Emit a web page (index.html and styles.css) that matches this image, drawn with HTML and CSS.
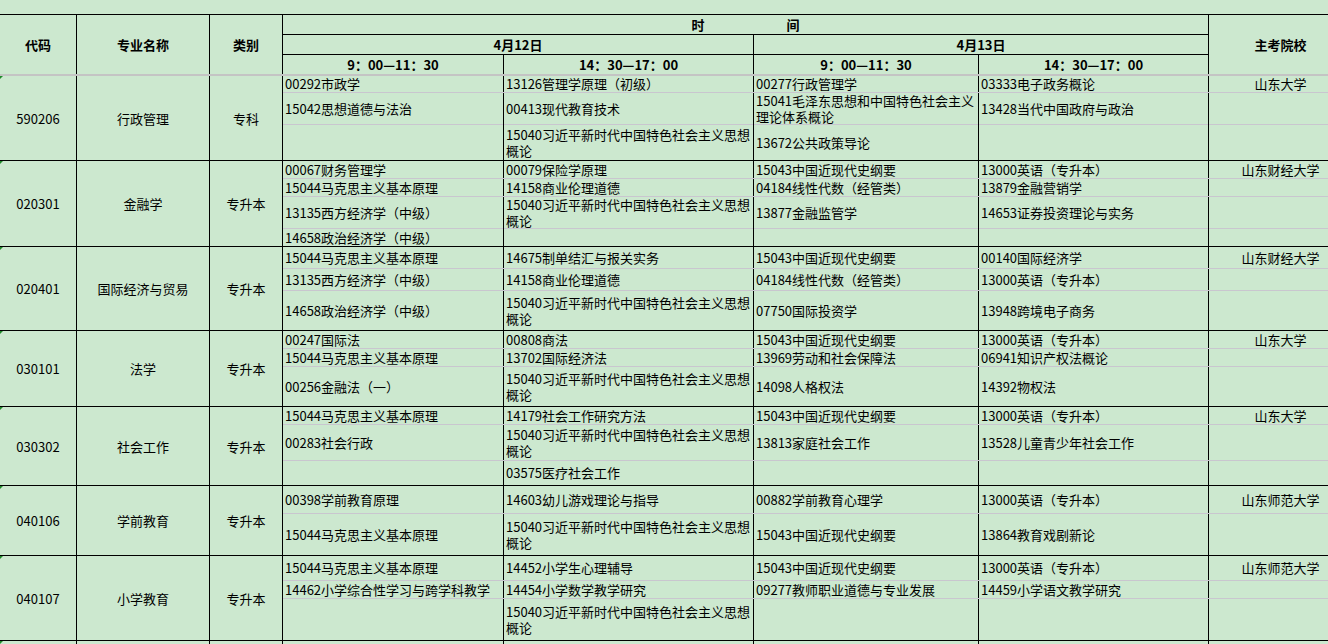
FILE: index.html
```html
<!DOCTYPE html>
<html lang="zh-CN">
<head>
<meta charset="utf-8">
<title>考试安排</title>
<link rel="stylesheet" href="styles.css">
</head>
<body>
<div class="sheet">
  <div class="head">
    <div class="hc c-code">代码</div>
    <div class="hc c-name">专业名称</div>
    <div class="hc c-kind">类别</div>
    <div class="hc c-time"><span>时</span><span>间</span></div>
    <div class="hc c-d1">4月12日</div>
    <div class="hc c-d2">4月13日</div>
    <div class="hc c-t1">9：00—11：30</div>
    <div class="hc c-t2">14：30—17：00</div>
    <div class="hc c-t3">9：00—11：30</div>
    <div class="hc c-t4">14：30—17：00</div>
    <div class="hc c-school">主考院校</div>
  </div>
  <div class="freeze"></div>

  <div class="group">
    <div class="code">590206</div>
    <div class="name">行政管理</div>
    <div class="kind">专科</div>
    <div class="subs">
      <div class="sub h17">
        <div class="cell">00292市政学</div>
        <div class="cell">13126管理学原理（初级）</div>
        <div class="cell">00277行政管理学</div>
        <div class="cell">03333电子政务概论</div>
        <div class="cell school">山东大学</div>
      </div>
      <div class="sub h32">
        <div class="cell">15042思想道德与法治</div>
        <div class="cell">00413现代教育技术</div>
        <div class="cell">15041毛泽东思想和中国特色社会主义理论体系概论</div>
        <div class="cell">13428当代中国政府与政治</div>
        <div class="cell school"></div>
      </div>
      <div class="sub h35">
        <div class="cell"></div>
        <div class="cell">15040习近平新时代中国特色社会主义思想概论</div>
        <div class="cell">13672公共政策导论</div>
        <div class="cell"></div>
        <div class="cell school"></div>
      </div>
    </div>
  </div>

  <div class="group">
    <div class="code">020301</div>
    <div class="name">金融学</div>
    <div class="kind">专升本</div>
    <div class="subs">
      <div class="sub h18">
        <div class="cell">00067财务管理学</div>
        <div class="cell">00079保险学原理</div>
        <div class="cell">15043中国近现代史纲要</div>
        <div class="cell">13000英语（专升本）</div>
        <div class="cell school">山东财经大学</div>
      </div>
      <div class="sub h18">
        <div class="cell">15044马克思主义基本原理</div>
        <div class="cell">14158商业伦理道德</div>
        <div class="cell">04184线性代数（经管类）</div>
        <div class="cell">13879金融营销学</div>
        <div class="cell school"></div>
      </div>
      <div class="sub h32">
        <div class="cell">13135西方经济学（中级）</div>
        <div class="cell">15040习近平新时代中国特色社会主义思想概论</div>
        <div class="cell">13877金融监管学</div>
        <div class="cell">14653证券投资理论与实务</div>
        <div class="cell school"></div>
      </div>
      <div class="sub h17">
        <div class="cell">14658政治经济学（中级）</div>
        <div class="cell"></div>
        <div class="cell"></div>
        <div class="cell"></div>
        <div class="cell school"></div>
      </div>
    </div>
  </div>

  <div class="group">
    <div class="code">020401</div>
    <div class="name">国际经济与贸易</div>
    <div class="kind">专升本</div>
    <div class="subs">
      <div class="sub h22">
        <div class="cell">15044马克思主义基本原理</div>
        <div class="cell">14675制单结汇与报关实务</div>
        <div class="cell">15043中国近现代史纲要</div>
        <div class="cell">00140国际经济学</div>
        <div class="cell school">山东财经大学</div>
      </div>
      <div class="sub h22">
        <div class="cell">13135西方经济学（中级）</div>
        <div class="cell">14158商业伦理道德</div>
        <div class="cell">04184线性代数（经管类）</div>
        <div class="cell">13000英语（专升本）</div>
        <div class="cell school"></div>
      </div>
      <div class="sub h39">
        <div class="cell">14658政治经济学（中级）</div>
        <div class="cell">15040习近平新时代中国特色社会主义思想概论</div>
        <div class="cell">07750国际投资学</div>
        <div class="cell">13948跨境电子商务</div>
        <div class="cell school"></div>
      </div>
    </div>
  </div>

  <div class="group">
    <div class="code">030101</div>
    <div class="name">法学</div>
    <div class="kind">专升本</div>
    <div class="subs">
      <div class="sub h18">
        <div class="cell">00247国际法</div>
        <div class="cell">00808商法</div>
        <div class="cell">15043中国近现代史纲要</div>
        <div class="cell">13000英语（专升本）</div>
        <div class="cell school">山东大学</div>
      </div>
      <div class="sub h18">
        <div class="cell">15044马克思主义基本原理</div>
        <div class="cell">13702国际经济法</div>
        <div class="cell">13969劳动和社会保障法</div>
        <div class="cell">06941知识产权法概论</div>
        <div class="cell school"></div>
      </div>
      <div class="sub h39">
        <div class="cell">00256金融法（一）</div>
        <div class="cell">15040习近平新时代中国特色社会主义思想概论</div>
        <div class="cell">14098人格权法</div>
        <div class="cell">14392物权法</div>
        <div class="cell school"></div>
      </div>
    </div>
  </div>

  <div class="group">
    <div class="code">030302</div>
    <div class="name">社会工作</div>
    <div class="kind">专升本</div>
    <div class="subs">
      <div class="sub h18">
        <div class="cell">15044马克思主义基本原理</div>
        <div class="cell">14179社会工作研究方法</div>
        <div class="cell">15043中国近现代史纲要</div>
        <div class="cell">13000英语（专升本）</div>
        <div class="cell school">山东大学</div>
      </div>
      <div class="sub h36">
        <div class="cell">00283社会行政</div>
        <div class="cell">15040习近平新时代中国特色社会主义思想概论</div>
        <div class="cell">13813家庭社会工作</div>
        <div class="cell">13528儿童青少年社会工作</div>
        <div class="cell school"></div>
      </div>
      <div class="sub h24">
        <div class="cell"></div>
        <div class="cell">03575医疗社会工作</div>
        <div class="cell"></div>
        <div class="cell"></div>
        <div class="cell school"></div>
      </div>
    </div>
  </div>

  <div class="group">
    <div class="code">040106</div>
    <div class="name">学前教育</div>
    <div class="kind">专升本</div>
    <div class="subs">
      <div class="sub h28">
        <div class="cell">00398学前教育原理</div>
        <div class="cell">14603幼儿游戏理论与指导</div>
        <div class="cell">00882学前教育心理学</div>
        <div class="cell">13000英语（专升本）</div>
        <div class="cell school">山东师范大学</div>
      </div>
      <div class="sub h41">
        <div class="cell">15044马克思主义基本原理</div>
        <div class="cell">15040习近平新时代中国特色社会主义思想概论</div>
        <div class="cell">15043中国近现代史纲要</div>
        <div class="cell">13864教育戏剧新论</div>
        <div class="cell school"></div>
      </div>
    </div>
  </div>

  <div class="group">
    <div class="code">040107</div>
    <div class="name">小学教育</div>
    <div class="kind">专升本</div>
    <div class="subs">
      <div class="sub h25">
        <div class="cell">15044马克思主义基本原理</div>
        <div class="cell">14452小学生心理辅导</div>
        <div class="cell">15043中国近现代史纲要</div>
        <div class="cell">13000英语（专升本）</div>
        <div class="cell school">山东师范大学</div>
      </div>
      <div class="sub h18">
        <div class="cell">14462小学综合性学习与跨学科教学</div>
        <div class="cell">14454小学数学教学研究</div>
        <div class="cell">09277教师职业道德与专业发展</div>
        <div class="cell">14459小学语文教学研究</div>
        <div class="cell school"></div>
      </div>
      <div class="sub h41">
        <div class="cell"></div>
        <div class="cell">15040习近平新时代中国特色社会主义思想概论</div>
        <div class="cell"></div>
        <div class="cell"></div>
        <div class="cell school"></div>
      </div>
    </div>
  </div>

  <div class="group">
    <div class="code"></div>
    <div class="name"></div>
    <div class="kind"></div>
    <div class="subs">
      <div class="sub h40">
        <div class="cell"></div>
        <div class="cell"></div>
        <div class="cell"></div>
        <div class="cell"></div>
        <div class="cell school"></div>
      </div>
    </div>
  </div>
</div>
</body>
</html>
```

FILE: styles.css
```css
* {
  box-sizing: border-box;
}

html,
body {
  margin: 0;
  padding: 0;
  overflow: hidden;
  background: #cce8cf;
}

body {
  font-family: "Noto Sans CJK SC", "Noto Sans", sans-serif;
  font-size: 13px;
  color: #000;
}

.sheet {
  width: 1353px;
  margin-top: 14px;
}

/* ---------- header ---------- */
.head {
  display: grid;
  grid-template-columns: 77px 133px 73px 221px 250px 225px 230px 144px;
  grid-template-rows: 20px 20px 19px;
  border-top: 1px solid #000;
}

.hc {
  display: flex;
  align-items: center;
  justify-content: center;
  border-right: 1px solid #000;
  font-weight: 700;
  line-height: 16px;
  white-space: nowrap;
}

.c-code { grid-column: 1; grid-row: 1 / 4; }
.c-name { grid-column: 2; grid-row: 1 / 4; }
.c-kind { grid-column: 3; grid-row: 1 / 4; }
.c-school { grid-column: 8; grid-row: 1 / 4; }

.c-time {
  grid-column: 4 / 8;
  grid-row: 1;
  gap: 82px;
  border-bottom: 1px solid #000;
}

.c-d1 {
  grid-column: 4 / 6;
  grid-row: 2;
  border-bottom: 1px solid #000;
}

.c-d2 {
  grid-column: 6 / 8;
  grid-row: 2;
  border-bottom: 1px solid #000;
}

.c-t1 { grid-column: 4; grid-row: 3; }
.c-t2 { grid-column: 5; grid-row: 3; }
.c-t3 { grid-column: 6; grid-row: 3; }
.c-t4 { grid-column: 7; grid-row: 3; }

.freeze {
  height: 2px;
  background: #c4c4c4;
}

/* ---------- body ---------- */
.group {
  display: flex;
  border-bottom: 1px solid #000;
}

.code,
.name,
.kind {
  flex: none;
  display: flex;
  align-items: center;
  justify-content: center;
  border-right: 1px solid #000;
}

.code {
  width: 77px;
  position: relative;
}

.code::before {
  content: "";
  position: absolute;
  left: 0;
  top: 0;
  border-top: 3px solid #1f8a2a;
  border-right: 3px solid transparent;
}

.name {
  width: 133px;
}

.kind {
  width: 73px;
}

.subs {
  flex: none;
  width: 1070px;
  display: flex;
  flex-direction: column;
}

.sub {
  display: grid;
  grid-template-columns: 221px 250px 225px 230px 144px;
}

.sub:not(:last-child) {
  border-bottom: 1px solid #c9c6cf;
}

.cell {
  display: flex;
  align-items: center;
  padding-left: 2px;
  border-right: 1px solid #000;
  line-height: 16px;
}

.school {
  justify-content: center;
  padding-left: 0;
}

.h17 { height: 17px; }
.h18 { height: 18px; }
.h22 { height: 22px; }
.h24 { height: 24px; }
.h25 { height: 25px; }
.h28 { height: 28px; }
.h32 { height: 32px; }
.h35 { height: 35px; }
.h36 { height: 36px; }
.h39 { height: 39px; }
.h40 { height: 40px; }
.h41 { height: 41px; }
```
